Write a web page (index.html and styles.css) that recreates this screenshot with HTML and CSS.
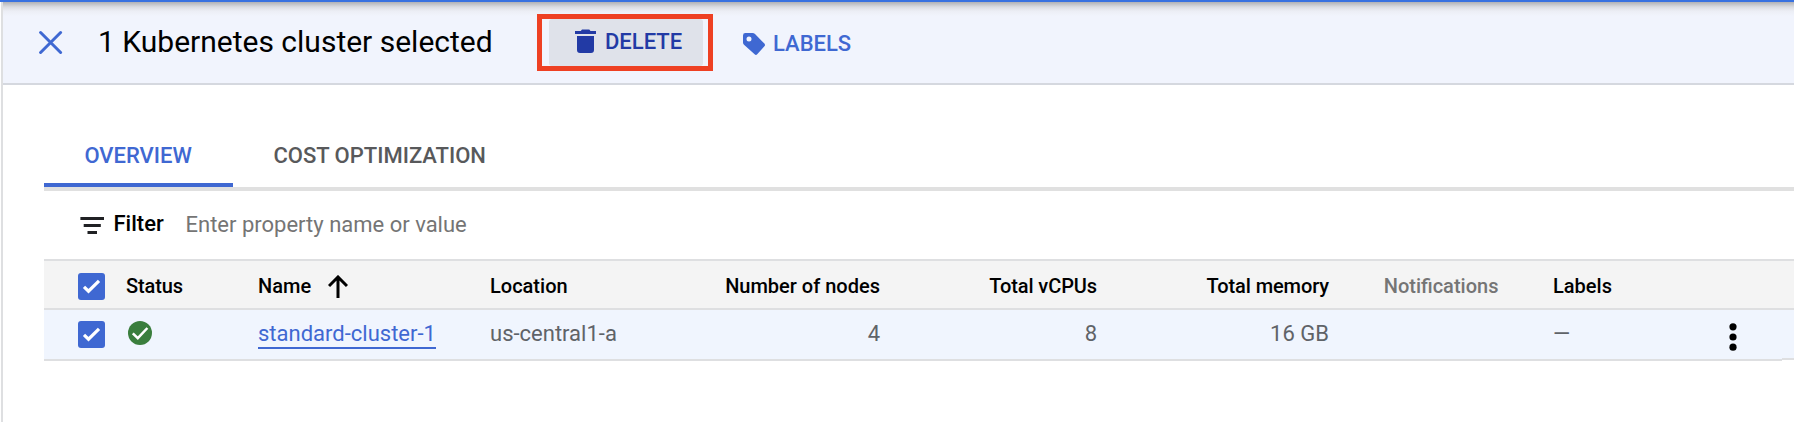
FILE: index.html
```html
<!DOCTYPE html>
<html lang="en">
<head>
<meta charset="utf-8">
<title>Kubernetes clusters</title>
<link rel="stylesheet" href="styles.css">
</head>
<body>
<div class="page">
  <header class="bar">
    <svg class="close" width="24" height="24" viewBox="0 0 24 24"><path d="M1.600 2.500L21.600 22.500M21.600 2.500L1.600 22.500"/></svg>
    <h1 class="title">1 Kubernetes cluster selected</h1>
    <div class="highlight">
      <button class="btn btn-delete">
        <svg class="trash" width="22" height="24" viewBox="0 0 22 24"><path d="M0 1.9H5.8L7 0.4H14.3L15.500 1.9H21V5H0zM2 7H19V21Q19 24 16 24H5Q2 24 2 21z"/></svg>
        <span>DELETE</span>
      </button>
    </div>
    <button class="btn btn-labels">
      <svg class="tag" width="23" height="23" viewBox="0 0 23 23"><path fill-rule="evenodd" d="M2.400 0H9.500Q11 0 12 1L21.400 10.600Q22.600 12 21.400 13.300L14.200 21.300Q13 22.500 11.600 21.300L1 11.800Q0 10.800 0 9.400V2.400Q0 0 2.400 0zM6 3.500A2.500 2.500 0 1 0 6 8.500A2.500 2.500 0 1 0 6 3.500z"/></svg>
      <span>LABELS</span>
    </button>
  </header>
  <main class="content">
    <nav class="tabs">
      <a class="tab active">OVERVIEW</a>
      <a class="tab">COST OPTIMIZATION</a>
    </nav>
    <div class="filter">
      <svg class="filter-icon" width="24" height="18" viewBox="0 0 24 18"><path d="M0.400 0H24V3H0.400zM3.700 7H20.800V10H3.700zM7.500 14H17V17H7.500z"/></svg>
      <span class="filter-name">Filter</span>
      <span class="placeholder">Enter property name or value</span>
    </div>
    <div class="table">
      <div class="row head">
        <span class="check"><svg width="27" height="27" viewBox="0 0 27 27"><path d="M6 13.800L10.500 18.200L21 7.800"/></svg></span>
        <span class="tight">Status</span>
        <span class="name">Name <svg class="arrow" width="20" height="23" viewBox="0 0 20 23"><path d="M10 23V2.500M1 11L10 2L19 11"/></svg></span>
        <span>Location</span>
        <span class="num">Number of nodes</span>
        <span class="num tight">Total vCPUs</span>
        <span class="num tight">Total memory</span>
        <span class="muted">Notifications</span>
        <span>Labels</span>
      </div>
      <div class="row data">
        <span class="check"><svg width="27" height="27" viewBox="0 0 27 27"><path d="M6 13.800L10.500 18.200L21 7.800"/></svg></span>
        <span class="status"><svg width="24" height="24" viewBox="0 0 24 24"><circle cx="12" cy="12" r="12"/><path d="M4.800 12.300L9.800 17.200L19.400 7"/></svg></span>
        <span><a class="link">standard-cluster-1</a></span>
        <span>us-central1-a</span>
        <span class="num">4</span>
        <span class="num">8</span>
        <span class="num">16 GB</span>
        <span></span>
        <span class="dash">—</span>
        <span class="more"><svg width="8" height="28" viewBox="0 0 8 28"><circle cx="4" cy="3.800" r="3.600"/><circle cx="4" cy="14" r="3.600"/><circle cx="4" cy="24.200" r="3.600"/></svg></span>
      </div>
    </div>
  </main>
</div>
</body>
</html>
```
FILE: styles.css
```css
* { box-sizing: border-box; }
body { margin: 0; background: #fff; font-family: Roboto, sans-serif; }
.page { width: 1794px; height: 422px; overflow: hidden; display: flex; flex-direction: column; padding-left: 3px; border-top: 2px solid #3871e0; background: linear-gradient(90deg, #fff 1px, #dedfe1 1px, #dedfe1 3px, #fff 3px); }
.bar { height: 83px; flex: none; padding-left: 36px; display: flex; align-items: flex-start; border-bottom: 2px solid #d5d8df; background: linear-gradient(180deg, #b0b1b6, #dadce2 5px, #eceef5 9px, #f1f4fd 14px); }
.close { margin-top: 28px; fill: none; stroke: #3f68d2; stroke-width: 3; stroke-linecap: round; }
.title { width: 439px; margin: 22px 0 0 35px; font-size: 30px; line-height: 35px; font-weight: 400; white-space: nowrap; color: #000; }
.highlight { margin-top: 12px; width: 176px; height: 57px; border: 5px solid #ee4023; padding: 0 5px 0 7px; }
.btn { border: 0; padding: 0; background: none; display: flex; align-items: flex-start; font: 500 22px/26px Roboto, sans-serif; }
.btn-delete { width: 154px; height: 47px; padding-left: 26px; gap: 8px; background: #dfe2ea; border-radius: 3px; color: #223aa5; }
.btn-delete span { margin-top: 10px; }
.trash { margin-top: 10px; fill: #223aa5; }
.btn-labels { margin: 31px 0 0 30px; gap: 7px; color: #3f68d2; }
.btn-labels span { margin-top: -2px; }
.tag { fill: #3f68d2; }
.content { padding: 40px 0 0 41px; }
.tabs { height: 66px; display: flex; border-bottom: 4px solid #e0e0e0; }
.tab { height: 62px; padding: 18px 40.4px 0; font-size: 22px; line-height: 26px; font-weight: 500; color: #58595b; white-space: nowrap; }
.tab.active { width: 189px; color: #3f68d2; border-bottom: 4px solid #3f68d2; }
.filter { height: 68px; padding: 26px 0 0 36px; display: flex; align-items: flex-start; font-size: 22px; line-height: 26px; }
.filter-icon { fill: #202124; }
.filter-name { width: 72px; margin: -6px 0 0 9.500px; font-weight: 500; }
.placeholder { margin-top: -5px; color: #757575; }
.row { display: grid; grid-template-columns: 48px 132px 232px 161px 229px 217px 232px 224px 176px 1fr; padding-left: 34px; border-bottom: 2px solid #dedfe1; white-space: nowrap; }
.head { height: 51px; border-top: 2px solid #dedfe1; background: #f4f4f4; font-size: 20px; line-height: 24px; font-weight: 500; padding-top: 12px; }
.head > span { padding-top: 1px; }
.head > .check { padding-top: 0; }
.name { display: flex; align-items: flex-start; gap: 17px; }
.tight { letter-spacing: -0.1px; }
.data { position: relative; height: 51px; background: #f0f5fe; font-size: 22px; line-height: 26px; color: #5f6368; padding-top: 11px; }
.data::after { content: ""; position: absolute; right: 0; bottom: -2px; width: 12px; height: 3px; background: linear-gradient(#dedfe1 2px, #fff 2px); }
.num { text-align: right; }
.check svg { display: block; background: #3f68d2; border-radius: 3px; fill: none; stroke: #fff; stroke-width: 3.2; }
.arrow { margin-top: 1px; fill: none; stroke: #000; stroke-width: 3; }
.status { padding-left: 2.300px; }
.status svg { display: block; }
.status circle { fill: #3a7e3d; }
.status path { fill: none; stroke: #fff; stroke-width: 2.500; }
.link { color: #3f68d2; padding-bottom: 1px; border-bottom: 2px solid #3f68d2; }
.muted { padding-left: 54.700px; color: #757575; }
.more { padding-top: 1.500px; }
.more svg { display: block; }
```
